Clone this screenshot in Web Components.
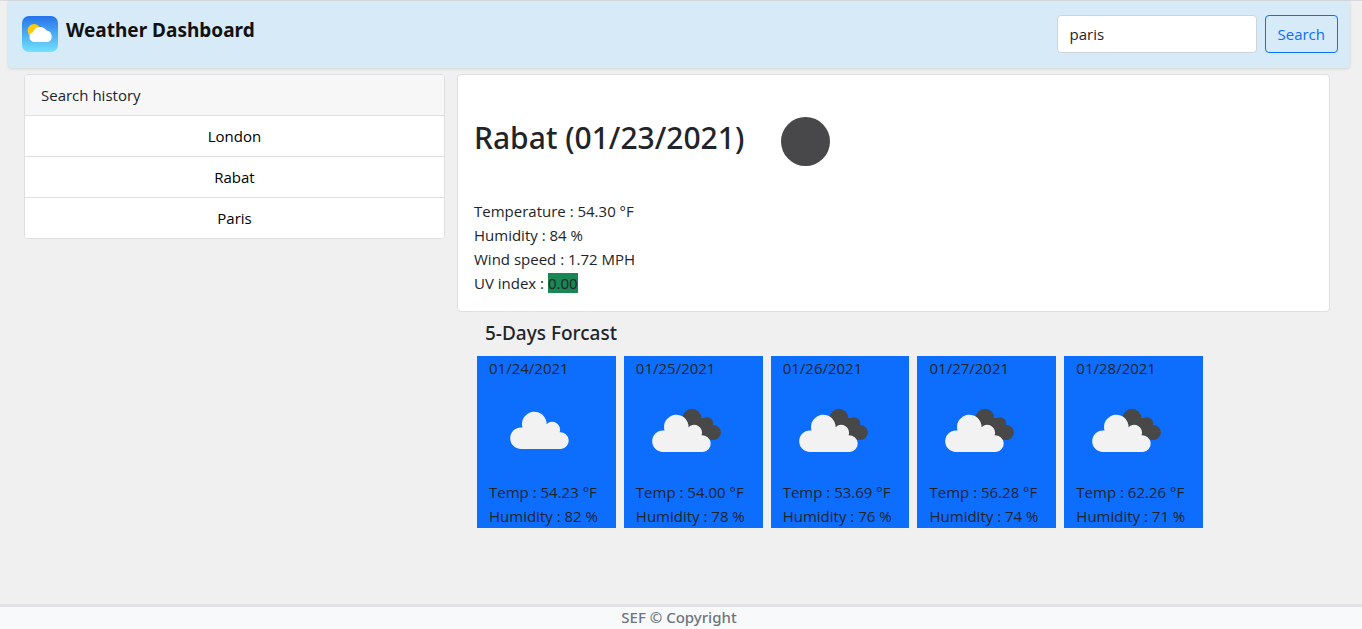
<!DOCTYPE html>
<html lang="en">
<head>
<meta charset="utf-8">
<meta name="viewport" content="width=device-width, initial-scale=1">
<title>Weather Dashboard</title>
<style>
  body {
    margin: 0;
    background: #f0f0f0;
    color: #212529;
    font: 400 15px/24px "Open Sans", "Noto Sans", sans-serif;
  }
</style>
</head>
<body>
<weather-app></weather-app>

<script>
class BaseElement extends HTMLElement {
  render(markup) {
    const template = document.createElement('template');
    template.innerHTML = '<style>*{box-sizing:border-box}h1,h2,h3,ul,p{margin:0;padding:0;font-weight:inherit}</style>' + markup;
    this.attachShadow({ mode: 'open' }).append(template.content.cloneNode(true));
  }
}

customElements.define('weather-icon', class extends BaseElement {
  connectedCallback() {
    const cloud = '<path fill="#f2f2f2" d="M32 69a10.800 10.800 0 0 1 0-21.600q.8 0 1.500.1A12.300 12.300 0 1 1 57.600 44.200A7.800 7.800 0 0 1 70.600 52.200A8.400 8.400 0 0 1 72 69Z"/>';
    const shapes = {
      night: '<circle cx="50.500" cy="50.500" r="24.500" fill="#48484a"/>',
      cloud,
      broken: '<g fill="#484848"><circle cx="56" cy="38" r="9.300"/><circle cx="71" cy="43.500" r="6.300"/><circle cx="77.300" cy="52.500" r="7.600"/><path d="M50 38H70L77 46V60H65Z"/></g><g transform="translate(-5 3)"><g stroke="#303238" stroke-width="1"><path fill="none" d="M55 36A12.400 12.400 0 0 1 57.400 44.200A7.800 7.800 0 0 1 70.400 52.200A8.400 8.400 0 0 1 78 56"/></g>' + cloud + '</g>'
    };
    this.render(`<style>:host{display:block;width:100px;height:100px}svg{display:block}</style>
      <svg width="100" height="100" viewBox="0 0 100 100" aria-hidden="true">${shapes[this.getAttribute('kind')]}</svg>`);
  }
});

customElements.define('app-header', class extends BaseElement {
  connectedCallback() {
    this.render(`<style>
      :host{display:block;border-top:1px solid #d8dade}
      header{display:flex;justify-content:space-between;align-items:flex-start;margin:0 12px 0 8px;padding:14px 12px 15px 14px;background:#d6eaf8;border-radius:0 0 4px 4px;box-shadow:0 1px 3px rgba(0,0,0,.12)}
      .brand{display:flex;gap:8px;color:#111;text-decoration:none}
      svg{display:block;margin-top:1px}
      h1{font-family:"Noto Sans",sans-serif;font-size:19px;line-height:30px;font-weight:700}
      form{display:flex;gap:8px}
      input,button{height:38px;border-radius:4px;font:inherit;line-height:24px;padding:0 12px}
      input{width:200px;border:1px solid #ced4da;background:#fff;color:#212529}
      button{border:1px solid #0d6efd;background:transparent;color:#0d6efd}
    </style>
    <header>
      <a class="brand" href="#">
        <svg width="36" height="36" viewBox="0 0 36 36" aria-hidden="true">
          <defs><linearGradient id="sky" x2="0" y2="1"><stop stop-color="#2674ea"/><stop offset="1" stop-color="#72e1fd"/></linearGradient></defs>
          <rect width="36" height="36" rx="7" fill="url(#sky)"/>
          <circle cx="12" cy="14.500" r="6.500" fill="#fecb0b"/>
          <path fill="#fff" d="M11.500 26a5 5 0 0 1-.500-9.700 7.500 7.500 0 0 1 13.500-1.800 6 6 0 0 1 1.500 11.500Z"/>
        </svg>
        <h1>Weather Dashboard</h1>
      </a>
      <form><input type="text" value="paris" aria-label="City"><button type="button">Search</button></form>
    </header>`);
  }
});

customElements.define('search-history', class extends BaseElement {
  connectedCallback() {
    this.render(`<style>
      :host{display:block;border:1px solid #dfdfdf;border-radius:4px;background:#fff;overflow:hidden}
      h2{padding:8px 16px;font-size:15px;background:#f7f7f7}
      ::slotted(button){display:block;width:100%;height:41px;padding:0;border:0;border-top:1px solid #dfdfdf;background:#fff;color:#000;font:inherit}
    </style><h2>Search history</h2><slot></slot>`);
  }
});

customElements.define('current-weather', class extends BaseElement {
  connectedCallback() {
    this.render(`<style>
      :host{display:block;padding:16px;border:1px solid #dfdfdf;border-radius:4px;background:#fff}
      .top{display:flex;gap:11px;padding-bottom:8px}
      h2{padding-top:27px;font-family:"Noto Sans",sans-serif;font-size:30px;line-height:40px;font-weight:500}
      mark{background:#198754;color:inherit}
    </style>
    <div class="top"><h2><slot name="title"></slot></h2><weather-icon kind="night"></weather-icon></div>
    <p>Temperature : 54.30 °F</p><p>Humidity : 84 %</p><p>Wind speed : 1.72 MPH</p><p>UV index : <mark>0.00</mark></p>`);
  }
});

customElements.define('forecast-day', class extends BaseElement {
  connectedCallback() {
    const a = name => this.getAttribute(name);
    this.render(`<style>:host{display:block;padding:0 0 0 12px;background:#0d6efd;white-space:nowrap}</style>
      <p>${a('date')}</p><weather-icon kind="${a('kind')}"></weather-icon>
      <p>Temp : ${a('temp')} °F</p><p>Humidity : ${a('humidity')} %</p>`);
  }
});

customElements.define('weather-forecast', class extends BaseElement {
  connectedCallback() {
    this.render(`<style>
      :host{display:block}
      h3{padding:9px 8px 11px;font-family:"Noto Sans",sans-serif;font-size:19px;line-height:24px;font-weight:500}
      .days{display:grid;grid-template-columns:repeat(6,1fr);gap:8px}
    </style><h3>5-Days Forcast</h3><div class="days"><slot></slot></div>`);
  }
});

customElements.define('app-footer', class extends BaseElement {
  connectedCallback() {
    this.render(`<style>
      :host{display:block;border-top:3px solid #e1e1e6;background:#f8f9fa}
      footer{padding:0 4px 2px 0;text-align:center;line-height:20px;font-family:"Noto Sans",sans-serif;font-weight:500;color:#6c757d}
    </style><footer>SEF © Copyright</footer>`);
  }
});

customElements.define('weather-app', class extends BaseElement {
  connectedCallback() {
    this.render(`<style>
      :host{display:flex;flex-direction:column;min-height:100vh}
      main{flex:1;display:grid;grid-template-columns:421fr 893fr;gap:12px;align-items:start;padding:6px 12px 24px 24px}
      current-weather{margin-right:20px}
      weather-forecast{margin-left:20px}
    </style>
    <app-header></app-header>
    <main>
      <search-history><button>London</button><button>Rabat</button><button>Paris</button></search-history>
      <section>
        <current-weather><span slot="title">Rabat (01/23/2021)</span></current-weather>
        <weather-forecast>
          <forecast-day date="01/24/2021" kind="cloud" temp="54.23" humidity="82"></forecast-day>
          <forecast-day date="01/25/2021" kind="broken" temp="54.00" humidity="78"></forecast-day>
          <forecast-day date="01/26/2021" kind="broken" temp="53.69" humidity="76"></forecast-day>
          <forecast-day date="01/27/2021" kind="broken" temp="56.28" humidity="74"></forecast-day>
          <forecast-day date="01/28/2021" kind="broken" temp="62.26" humidity="71"></forecast-day>
        </weather-forecast>
      </section>
    </main>
    <app-footer></app-footer>`);
  }
});
</script>
</body>
</html>
